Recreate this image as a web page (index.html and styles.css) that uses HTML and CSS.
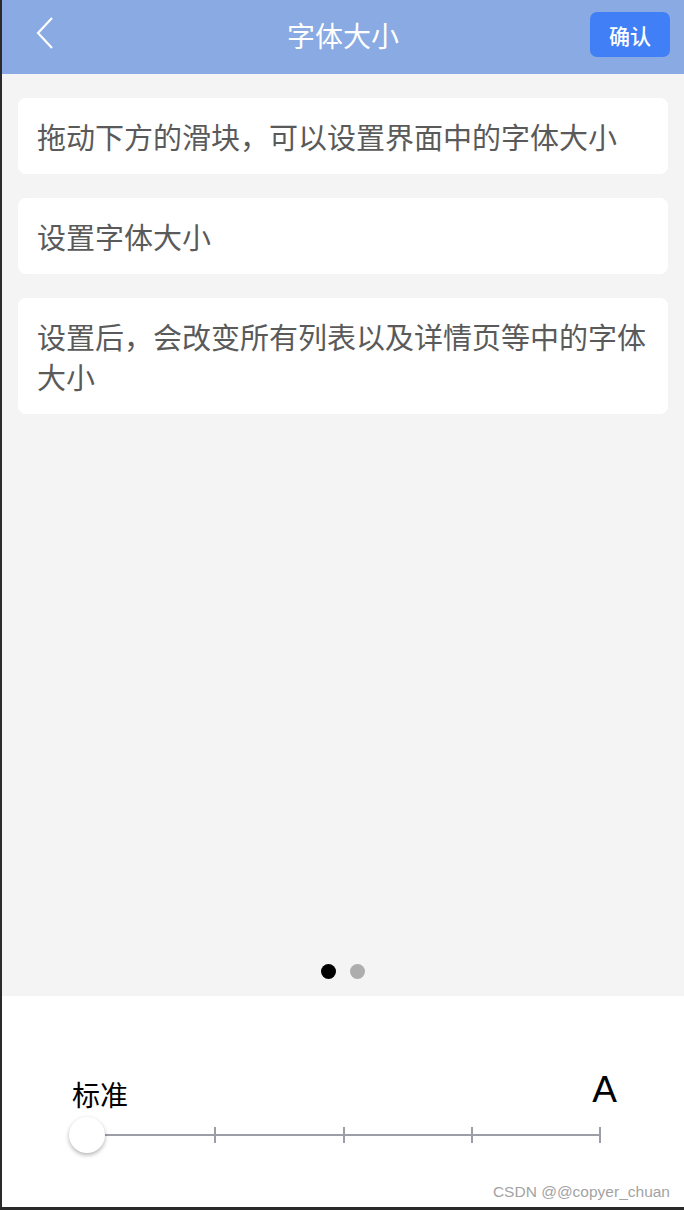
FILE: index.html
```html
<!DOCTYPE html>
<html lang="zh-CN">
<head>
  <meta charset="UTF-8" />
  <meta name="viewport" content="width=device-width, initial-scale=1.0"/>
  <title>字体大小</title>
  <link rel="stylesheet" href="styles.css">
</head>
<body>

  <div class="header">
    <div class="back">
      <svg width="18" height="32" viewBox="0 0 18 32">
        <polyline points="16,1 2,16 16,31" fill="none" stroke="#fff" stroke-width="2.2" />
      </svg>
    </div>
    <div class="title">字体大小</div>
    <button class="confirm">确认</button>
  </div>

  <div class="main">
    <div class="card">拖动下方的滑块，可以设置界面中的字体大小</div>
    <div class="card">设置字体大小</div>
    <div class="card">设置后，会改变所有列表以及详情页等中的字体大小</div>

    <div class="dots">
      <span class="dot active"></span>
      <span class="dot"></span>
    </div>
  </div>

  <div class="footer">
    <div class="labels">
      <span class="label-small">标准</span>
      <span class="label-big">A</span>
    </div>
    <div class="track">
      <span class="tick"></span>
      <span class="tick"></span>
      <span class="tick"></span>
      <span class="tick"></span>
      <span class="tick"></span>
      <span class="knob"></span>
    </div>
    <div class="watermark">CSDN @@copyer_chuan</div>
  </div>

</body>
</html>
```

FILE: styles.css
```css
html, body {
  margin: 0;
  padding: 0;
}
body {
  font-family: "Noto Sans CJK SC", "Noto Sans", sans-serif;
  width: 684px;
  height: 1210px;
  box-sizing: border-box;
  border-left: 2px solid #2a2a2a;
  border-bottom: 3px solid #2a2a2a;
  display: flex;
  flex-direction: column;
  background: #fff;
}
.header {
  height: 74px;
  flex-shrink: 0;
  background: #89aae2;
  display: flex;
  align-items: center;
  justify-content: space-between;
  padding: 0 14px 0 34px;
  position: relative;
}
.back {
  display: flex;
  margin-top: -9px;
}
.title {
  position: absolute;
  left: 0;
  right: 0;
  text-align: center;
  color: #fff;
  font-size: 28px;
  line-height: 74px;
  margin-top: -4px;
  pointer-events: none;
}
.confirm {
  width: 80px;
  height: 45px;
  margin-top: -5px;
  border: none;
  border-radius: 7px;
  background: #417ff6;
  color: #fff;
  font-family: "Noto Sans CJK SC", sans-serif;
  font-size: 21px;
  font-weight: 500;
  padding: 0;
  cursor: pointer;
}
.main {
  flex: 1;
  background: #f4f4f4;
  padding: 24px 16px 0;
  display: flex;
  flex-direction: column;
  gap: 24px;
}
.card {
  background: #fff;
  border-radius: 8px;
  padding: 18px 18px 18px 19px;
  font-size: 29px;
  line-height: 40px;
  color: #5a5a5a;
}
.dots {
  margin-top: auto;
  margin-bottom: 17px;
  display: flex;
  justify-content: center;
  gap: 14px;
}
.dot {
  width: 15px;
  height: 15px;
  border-radius: 50%;
  background: #adadad;
}
.dot.active { background: #000; }
.footer {
  height: 211px;
  flex-shrink: 0;
  padding: 68px 67px 0 70px;
  box-sizing: border-box;
  position: relative;
}
.labels {
  height: 44px;
  display: flex;
  justify-content: space-between;
  align-items: flex-end;
  color: #000;
}
.label-small {
  font-size: 28px;
  line-height: 28px;
}
.label-big {
  font-family: "Liberation Sans", Arial, sans-serif;
  font-size: 37px;
  line-height: 37px;
}
.track {
  margin: 9px 0 0 14px;
  width: 515px;
  height: 36px;
  display: flex;
  justify-content: space-between;
  align-items: center;
  position: relative;
  background: linear-gradient(#9b9fa5, #9b9fa5) center / 100% 2px no-repeat;
}
.tick {
  width: 2px;
  height: 16px;
  background: #9b9fa5;
}
.knob {
  position: absolute;
  left: -17px;
  top: 0;
  width: 36px;
  height: 36px;
  border-radius: 50%;
  background: #fff;
  box-shadow: 0 2px 4px rgba(0, 0, 0, 0.3);
}
.watermark {
  position: absolute;
  right: 14px;
  bottom: 8px;
  font-family: "Liberation Sans", Arial, sans-serif;
  font-size: 15.5px;
  line-height: 1;
  color: #a3a3a3;
  text-shadow: 0 0 2px #fff;
}
```
